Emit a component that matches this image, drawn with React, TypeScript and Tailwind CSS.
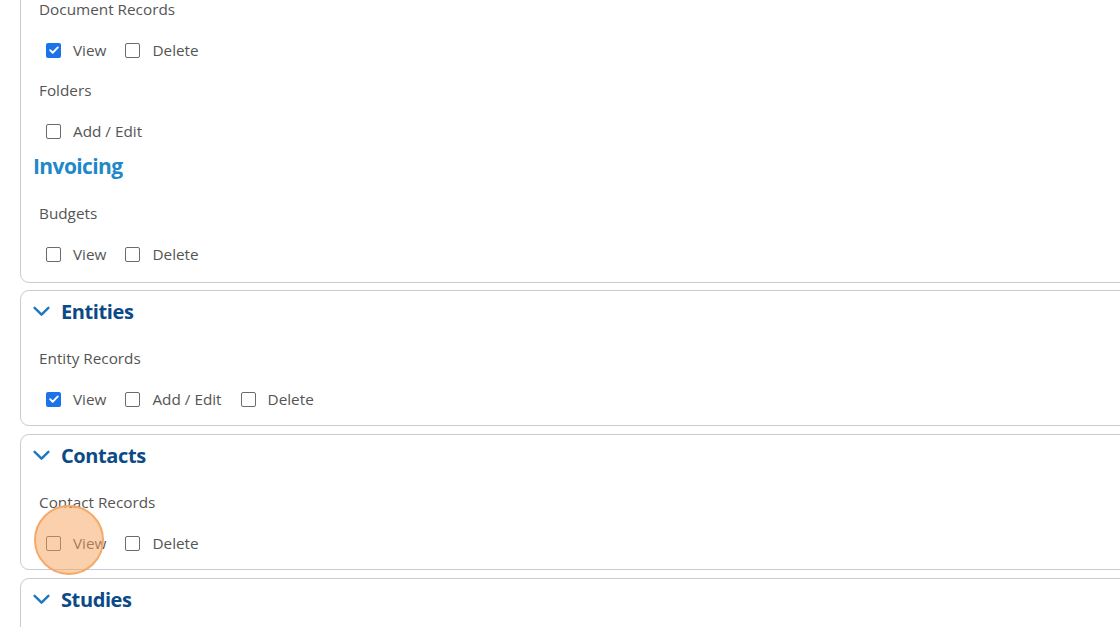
import React from "react";

type Perm = { label: string; checked?: boolean };

function Checkbox({ checked }: { checked?: boolean }) {
  if (checked) {
    return (
      <span className="flex h-[15px] w-[15px] items-center justify-center rounded-[2px] bg-[#1a73e8]">
        <svg viewBox="0 0 14 14" className="h-[12px] w-[12px]" fill="none">
          <path d="M2.5 7.2l3 3 6-6.2" stroke="#fff" strokeWidth="2.2" strokeLinecap="round" strokeLinejoin="round" />
        </svg>
      </span>
    );
  }
  return <span className="block h-[15px] w-[15px] rounded-[2px] border-[1.5px] border-[#6b6b6b] bg-white" />;
}

function PermRow({ items, className = "" }: { items: Perm[]; className?: string }) {
  return (
    <div className={`flex h-[24px] items-center gap-[19px] pl-[7px] ${className}`}>
      {items.map((p) => (
        <label key={p.label} className="flex items-center gap-[12px] text-[15.3px] text-[#555]">
          <Checkbox checked={p.checked} />
          <span>{p.label}</span>
        </label>
      ))}
    </div>
  );
}

function GroupLabel({ children, className = "" }: { children: React.ReactNode; className?: string }) {
  return <div className={`flex h-[24px] items-center text-[15.3px] text-[#555] ${className}`}>{children}</div>;
}

function Chevron() {
  return (
    <svg viewBox="0 0 18 12" className="h-[11px] w-[17px]" fill="none">
      <path d="M1.5 2l7.5 7.5L16.5 2" stroke="#1b78bd" strokeWidth="2.6" strokeLinecap="round" strokeLinejoin="round" />
    </svg>
  );
}

function Section({ title, children }: { title: string; children?: React.ReactNode }) {
  return (
    <div className="rounded-[9px] border border-[#c6ccd1] bg-white pl-[12px] pb-[14px]">
      <div className="flex h-[41px] items-center gap-[11px]">
        <Chevron />
        <h2 className="text-[20px] font-bold tracking-[-0.4px] text-[#0b4a86]">{title}</h2>
      </div>
      <div className="pl-[6px]">{children}</div>
    </div>
  );
}

export default function App() {
  return (
    <div
      className="relative h-[627px] w-[1120px] overflow-hidden bg-white"
      style={{ fontFamily: '"Open Sans", "Noto Sans", sans-serif' }}
    >
      <div className="mt-[-60px] ml-[20px] flex w-[1140px] flex-col gap-[8px]">
        {/* documents card, top cut off */}
        <div className="mb-[-1px] rounded-[9px] border border-[#c6ccd1] bg-white pt-[56px] pb-[16px] pl-[18px]">
          <GroupLabel>Document Records</GroupLabel>
          <PermRow className="mt-[17px]" items={[{ label: "View", checked: true }, { label: "Delete" }]} />
          <GroupLabel className="mt-[16px]">Folders</GroupLabel>
          <PermRow className="mt-[17px]" items={[{ label: "Add / Edit" }]} />
          <div className="mt-[10px] ml-[-6px] flex h-[28px] items-center text-[21px] font-bold tracking-[-0.6px] text-[#1f88c9]">
            Invoicing
          </div>
          <GroupLabel className="mt-[20px]">Budgets</GroupLabel>
          <PermRow className="mt-[17px]" items={[{ label: "View" }, { label: "Delete" }]} />
        </div>

        <Section title="Entities">
          <GroupLabel className="mt-[14px]">Entity Records</GroupLabel>
          <PermRow
            className="mt-[17px]"
            items={[{ label: "View", checked: true }, { label: "Add / Edit" }, { label: "Delete" }]}
          />
        </Section>

        <Section title="Contacts">
          <GroupLabel className="mt-[14px]">Contact Records</GroupLabel>
          <PermRow className="mt-[17px]" items={[{ label: "View" }, { label: "Delete" }]} />
        </Section>

        <div className="h-[120px] rounded-[9px] border border-[#c6ccd1] bg-white pl-[12px]">
          <div className="flex h-[41px] items-center gap-[11px]">
            <Chevron />
            <h2 className="text-[20px] font-bold tracking-[-0.4px] text-[#0b4a86]">Studies</h2>
          </div>
        </div>
      </div>

      {/* click highlight */}
      <div className="pointer-events-none absolute left-[34px] top-[505px] h-[70px] w-[70px] rounded-full border-2 border-[#f5a868] bg-[#f8a35c]/50" />
    </div>
  );
}
